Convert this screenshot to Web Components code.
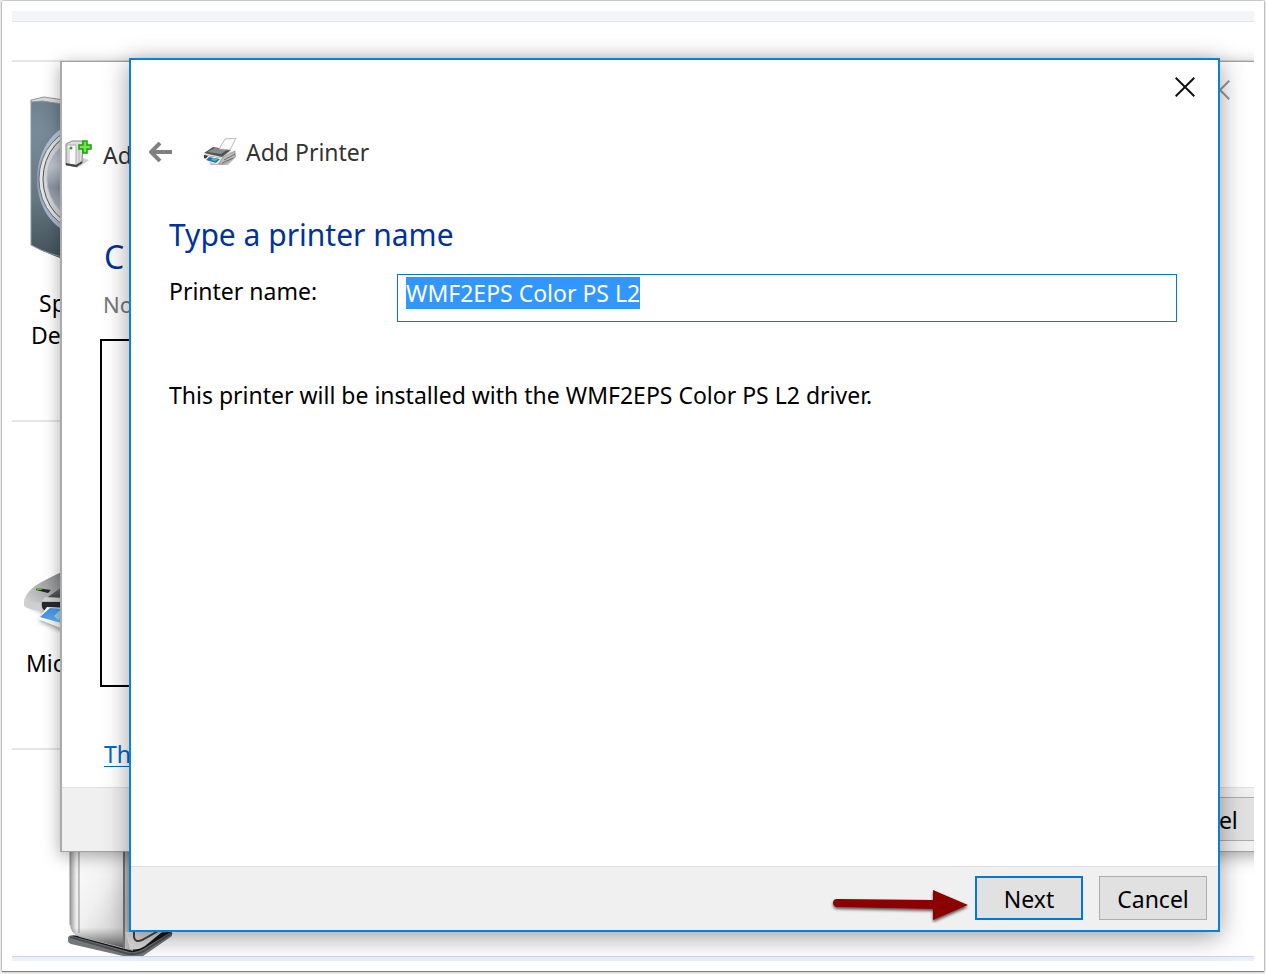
<!DOCTYPE html>
<html lang="en">
<head>
<meta charset="utf-8">
<title>Add Printer</title>
<style>
  body { margin: 0; background: #fff; color: #000; font: 23px/32px "Noto Sans", "Open Sans", sans-serif; }
</style>
</head>
<body>
<desktop-screen>
  <device-tile slot="tiles" kind="speaker"><span>Sp</span><span>De</span></device-tile>
  <device-tile slot="tiles" kind="printer"><span>Mic</span></device-tile>
  <device-tile slot="tiles" kind="server"></device-tile>
  <device-wizard slot="back"></device-wizard>
  <printer-wizard slot="front"></printer-wizard>
</desktop-screen>

<script>
const define = (name, html, ready) => {
  const template = document.createElement('template');
  template.innerHTML = html;
  customElements.define(name, class extends HTMLElement {
    constructor() {
      super();
      this.attachShadow({ mode: 'open' }).append(template.content.cloneNode(true));
    }
    connectedCallback() { if (ready) ready.call(this); }
  });
};

const ART = {
  speaker: `<svg width="120" height="166" viewBox="0 0 120 166" style="margin:34px 0 0 18px">
    <defs>
      <linearGradient id="b" x2="0" y2="1"><stop stop-color="#6c808e"/><stop offset=".2" stop-color="#788b98"/><stop offset=".6" stop-color="#647782"/><stop offset="1" stop-color="#3f4d54"/></linearGradient>
      <linearGradient id="c" x2="0" y2="1"><stop stop-color="#9aa7b3"/><stop offset=".35" stop-color="#c0c8d2"/><stop offset=".6" stop-color="#8c96a4"/><stop offset="1" stop-color="#c3cad6"/></linearGradient>
      <linearGradient id="r" x2="0" y2="1"><stop stop-color="#c6d6ee"/><stop offset=".5" stop-color="#8e9cae"/><stop offset="1" stop-color="#b4c4e6"/></linearGradient>
    </defs>
    <path d="M1 4 L14 2 L60 10 L60 170 Q28 164 1 149Z" fill="url(#b)"/>
    <path d="M1 4 L14 1 L60 8 V12 L12 5 L1 6Z" fill="#dadcdc" stroke="#919799"/>
    <path d="M1 5V149Q18 159 50 165" fill="none" stroke="#8c989d"/>
    <ellipse cx="51" cy="83" rx="44" ry="56" fill="url(#r)"/>
    <ellipse cx="53" cy="83" rx="44" ry="51" fill="#e4e4e2" stroke="#68717a"/>
    <ellipse cx="55" cy="83" rx="42" ry="48" fill="#d5d6d8" stroke="#4f565c"/>
    <ellipse cx="59" cy="83" rx="42" ry="43" fill="url(#c)" stroke="#b5bbc2"/>
    <path d="M31 97V84Q40 92 60 89V97Z" fill="#667280" opacity=".5"/>
  </svg>`,
  printer: `<svg width="100" height="62" viewBox="0 0 100 62" style="margin:149px 0 0 12px">
    <defs>
      <linearGradient id="p" x1="1" x2="0" y2="1"><stop stop-color="#7c7e80"/><stop offset=".6" stop-color="#b4b5b6"/><stop offset="1" stop-color="#e0e0e0"/></linearGradient>
      <linearGradient id="k" x2="0" y2="1"><stop stop-color="#77797b"/><stop offset="1" stop-color="#3a3b3c"/></linearGradient>
      <linearGradient id="f" x2="1" y2="1"><stop stop-color="#3a80e8"/><stop offset="1" stop-color="#73c9ed"/></linearGradient>
      <filter id="s" x="-20%" y="-20%" width="140%" height="140%"><feGaussianBlur stdDeviation="2"/></filter>
    </defs>
    <path d="M4 35 L20 42 L15 50 L42 62 V32Z" fill="#666" opacity=".6" filter="url(#s)"/>
    <path d="M0 29 Q3 21 11 15 Q22 8 42 -1 V30 L18 40 Q5 38 1 36Z" fill="url(#p)"/>
    <path d="M0 30 L18 32 V40 Q4 38 0 35Z" fill="#cfcfcf"/>
    <path d="M13 17 L27 19 L24 22 L12 19Z" fill="#252825"/>
    <path d="M13 18 h5" stroke="#56b42a" stroke-width="2"/>
    <path d="M24 26 L42 13 V30 L20 29Z" fill="url(#k)"/>
    <path d="M21 26 L42 27 V31 L18 30Z" fill="#d0d1d2"/>
    <path d="M18 31 L42 31 V42 L20 39 Q17 37 18 31Z" fill="#29292a"/>
    <path d="M23 36 L44 37 V60 L14 48Z" fill="#f9f9f9"/>
    <path d="M26 37 L44 38 V54 L16 46Z" fill="url(#f)"/>
    <path d="M30 45 l5-5 h8 v11 l-5-4-4 2z" fill="#afe0fa" opacity=".75"/>
  </svg>`,
  server: `<svg width="106" height="122" viewBox="0 0 106 122" style="margin:84px 0 0 56px">
    <defs>
      <linearGradient id="a" x2=".6" y2="1"><stop stop-color="#fff"/><stop offset=".6" stop-color="#f0f0f0"/><stop offset="1" stop-color="#d4d4d4"/></linearGradient>
      <linearGradient id="e" x2="1" y2="0"><stop stop-color="#999"/><stop offset=".1" stop-color="#eee"/><stop offset=".8" stop-color="#ddd"/><stop offset="1" stop-color="#999"/></linearGradient>
      <linearGradient id="d" x2="0" y2="1"><stop offset=".82" stop-color="#666" stop-opacity="0"/><stop offset="1" stop-color="#333" stop-opacity=".8"/></linearGradient>
    </defs>
    <path d="M0 104 Q0 101 6 101 L66 112 L104 96 V102 L75 122 H55 L3 110 Q0 109 0 107Z" fill="#727779"/>
    <path d="M4 102 L62 118 Q69 119 75 115 L103 98 L68 99Z" fill="#161717"/>
    <path d="M2 103 L57 119 Q68 122 76 117 L104 99" fill="none" stroke="#4b4f50" stroke-width="2"/>
    <path d="M2 0 H65 V117 L12 103 Q2 99 2 90Z" fill="url(#e)"/>
    <path d="M11 0 H56 V114 L11 100Z" fill="url(#a)"/>
    <path d="M2 92 V0 H56 V114 L12 103 Q2 99 2 92Z" fill="url(#d)"/>
    <path d="M11 0 V99 M2 0 V91" stroke="#8f8f8f"/>
    <path d="M56 0 V115" stroke="#777" stroke-width="2"/>
    <path d="M57 98 H94 L77 112 Q69 117 62 115Z" fill="#d8d8d8"/>
    <path d="M66 98 V103 Q67 109 74 106 L92 96" fill="none" stroke="#444" stroke-width="2"/>
  </svg>`
};

define('device-tile', `<style>
  :host { display: block; box-sizing: border-box; border-top: 2px solid #e5e5e5; height: 328px; flex: none; overflow: hidden; }
  :host([kind=speaker]) { height: 360px; }
  :host([kind=server]) { flex: 1 1 0; }
  svg { display: block; }
  .label { display: flex; flex-direction: column; width: 60px; margin: 14px 0 0 14px; }
  :host([kind=speaker]) .label { align-items: flex-start; width: 44px; margin: 25px 0 0 19px; }
  ::slotted(span:first-child:not(:last-child)) { margin-left: 8px; }
</style><div id="art"></div><div class="label"><slot></slot></div>`, function () {
  this.shadowRoot.getElementById('art').innerHTML = ART[this.getAttribute('kind')];
});

define('desktop-screen', `<style>
  :host { display: flex; box-sizing: border-box; min-height: 100vh; padding: 1px 2px 3px; background: #f1f1f1; }
  .paper { flex: 1; display: flex; padding: 10px; background: #fff; box-shadow: 0 0 2px #777, 0 1px 1px #888; }
  .screen { flex: 1; display: flex; flex-direction: column; position: relative; overflow: hidden; }
  .bar { flex: none; height: 10px; background: #f3f5f8; border-bottom: 1px solid #e5e5e5; margin-bottom: 38px; }
  .tiles { flex: 1; display: flex; flex-direction: column; }
  .status { flex: none; height: 4px; background: #eaf0fa; border-top: 1px solid #cbd9eb; }
  .back, .front { position: absolute; display: flex; }
  .back { inset: 50px -14px 109px 48px; }
  .front { inset: 47px 34px 29px 117px; }
  .back ::slotted(*), .front ::slotted(*) { flex: 1; }
</style>
<div class="paper"><main class="screen">
  <div class="bar"></div>
  <div class="tiles"><slot name="tiles"></slot></div>
  <div class="status"></div>
  <div class="back"><slot name="back"></slot></div>
  <div class="front"><slot name="front"></slot></div>
</main></div>`);

define('push-button', `<style>
  :host { display: block; width: 108px; height: 44px; }
  button { display: block; width: 100%; height: 100%; padding: 2px 0 0; border: 1px solid #adadad; background: #e1e1e1; color: #000; font: inherit; line-height: 38px; }
  :host([primary]) button { border: 2px solid #0078d7; }
</style><button type="button"><slot></slot></button>`);

define('window-footer', `<style>
  :host { display: flex; justify-content: flex-end; gap: 16px; box-sizing: border-box; height: 64px; padding: 9px 11px; background: #f0f0f0; border-top: 1px solid #dfdfdf; }
</style><slot></slot>`);

define('close-button', `<style>
  :host { display: block; width: 20px; height: 20px; color: #111; }
  button { display: block; padding: 0; border: 0; background: none; color: inherit; }
  svg { display: block; }
</style><button type="button" aria-label="Close"><svg width="20" height="20" viewBox="0 0 20 20"><path d="M.7.7 19.3 19.3M19.3.7.7 19.3" fill="none" stroke="currentColor" stroke-width="2"/></svg></button>`);

define('device-wizard', `<style>
  :host { display: flex; flex-direction: column; position: relative; box-sizing: border-box; background: #fff; border: 1px solid #a0a0a0; border-left: 2px solid #aaa; box-shadow: 0 4px 16px rgba(0,0,0,.34); }
  close-button { position: absolute; top: 18px; right: 37px; color: #999; }
  header { display: flex; align-items: center; gap: 10px; height: 36px; padding: 75px 0 0 3px; color: #333; }
  .body { flex: 1; display: flex; flex-direction: column; align-items: flex-start; padding: 64px 41px 17px; }
  h1 { margin: 0 0 0 1px; font-weight: 400; font-size: 32px; line-height: 40px; color: #003399; }
  p { margin: 11px 0 19px; font-size: 22px; color: #777; }
  .list { flex: 1; align-self: stretch; box-sizing: border-box; margin: 0 21px 51px -3px; border: 2px solid #000; }
  a { margin-left: 1px; color: #0066cc; text-underline-offset: 3px; text-decoration-thickness: 1px; }
</style>
<close-button></close-button>
<header>
  <svg width="28" height="30" viewBox="0 0 28 30">
    <path d="M14 27 L24 20 L18 18Z" fill="#ccc"/>
    <path d="M1 4 L7 1 H18 L17 23 L12 27 L1 25Z" fill="#dedede" stroke="#888"/>
    <path d="M2 5 H11 V25 L2 24Z" fill="#fafafa" stroke="#aaa"/>
    <path d="M1 24 L11 26 L17 22" fill="none" stroke="#444" stroke-width="2"/>
    <path d="M4 8 V23 M14 9 V23" stroke="#b5b5b5"/><circle cx="6" cy="8" r="1.5" fill="#2aa51d"/>
    <path d="M18 1 H22 V5 H26 V9 H22 V13 H18 V9 H14 V5 H18Z" fill="#78e252" stroke="#14a305" stroke-width="1.5"/>
  </svg><span>Ad</span>
</header>
<div class="body"><h1>C</h1><p>No</p><div class="list"></div><a href="#">Th</a></div>
<window-footer><push-button>Cancel</push-button></window-footer>`);

define('printer-wizard', `<style>
  :host { display: flex; flex-direction: column; box-sizing: border-box; background: #fff; border: 2px solid #0a7fdb; box-shadow: 0 5px 24px rgba(0,0,0,.38); }
  .title { display: flex; justify-content: flex-end; align-items: center; height: 54px; padding-right: 23px; }
  header { display: flex; align-items: center; height: 76px; padding-left: 18px; color: #333; }
  .return { display: block; padding: 0; border: 0; background: none; }
  svg { display: block; }
  .icon { margin: 0 9px 0 30px; }
  form { flex: 1; padding: 25px 41px 0 38px; }
  h1 { margin: 0 0 19px; font-weight: 400; font-size: 30px; line-height: 40px; color: #003399; }
  .field { display: grid; grid-template-columns: 228px 1fr; align-items: start; }
  label { line-height: 34px; }
  input { box-sizing: border-box; width: 100%; height: 48px; margin: 0; padding: 2px 8px 12px; border: 1px solid #0078d7; border-radius: 0; outline: 0; background: #fff; color: #000; font: inherit; }
  input::selection { background: #3296ff; color: #fff; }
  p { margin: 57px 0 0; }
  .pointer { flex: none; margin: -1px -12px 0 0; }
</style>
<div class="title"><close-button></close-button></div>
<header>
  <button class="return" type="button" aria-label="Back"><svg width="24" height="20" viewBox="0 0 24 20"><path d="M11 1 2 10 11 19M3 10H23" fill="none" stroke="#808080" stroke-width="4"/></svg></button>
  <svg class="icon" width="34" height="28" viewBox="0 0 34 28">
    <path d="M3 20 L8 27 L25 27 L33 19 L32 14 L20 15Z" fill="#bbb"/>
    <path d="M0 17 L10 11 L32 14 L32 19 L20 26 L1 21Z" fill="#dedede"/>
    <path d="M20 19 L32 13 V19 L21 26 H16Z" fill="#bdbdbd" stroke="#888" stroke-width=".7"/>
    <path d="M21 22 L32 16 M19 25 L30 20" stroke="#555" stroke-width=".8"/>
    <path d="M1 15 L10 9 L28 12 L19 19Z" fill="#505355"/>
    <path d="M4 14 L12 10 L24 12 L18 16Z" fill="#888b8d"/>
    <path d="M16 11 L22 1 L33 0 L27 12Z" fill="#fafafa" stroke="#aaa" stroke-width=".8"/>
    <path d="M1 17 L18 20 L15 23 L1 20Z" fill="#333"/>
    <path d="M5 18 L18 20 L14 26 L1 23Z" fill="#fff"/>
    <path d="M6 19 L17 21 L13 25 L3 22Z" fill="#226ec3"/><path d="M10 20 L15 21 L12 23 L8 22Z" fill="#57c691"/>
  </svg>
  <span>Add Printer</span>
</header>
<form>
  <h1>Type a printer name</h1>
  <div class="field"><label for="name">Printer name:</label><input id="name" type="text" value="WMF2EPS Color PS L2" spellcheck="false" autocomplete="off"></div>
  <p>This printer will be installed with the WMF2EPS Color PS L2 driver.</p>
</form>
<window-footer>
  <svg class="pointer" width="142" height="48" viewBox="0 0 142 48" aria-hidden="true">
    <defs><filter id="sh" x="-10%" y="-30%" width="120%" height="180%"><feDropShadow dx="0" dy="2" stdDeviation="1.5" flood-opacity=".65"/></filter></defs>
    <path d="M8 24 L104 25 V15 L139 30 L104 45 V34 L8 32 Q4 31 4 28 Q4 24 8 24Z" fill="#8b0000" filter="url(#sh)"/>
  </svg>
  <push-button primary>Next</push-button><push-button>Cancel</push-button>
</window-footer>`, function () {
  const input = this.shadowRoot.getElementById('name');
  input.focus();
  input.select();
});
</script>
</body>
</html>
